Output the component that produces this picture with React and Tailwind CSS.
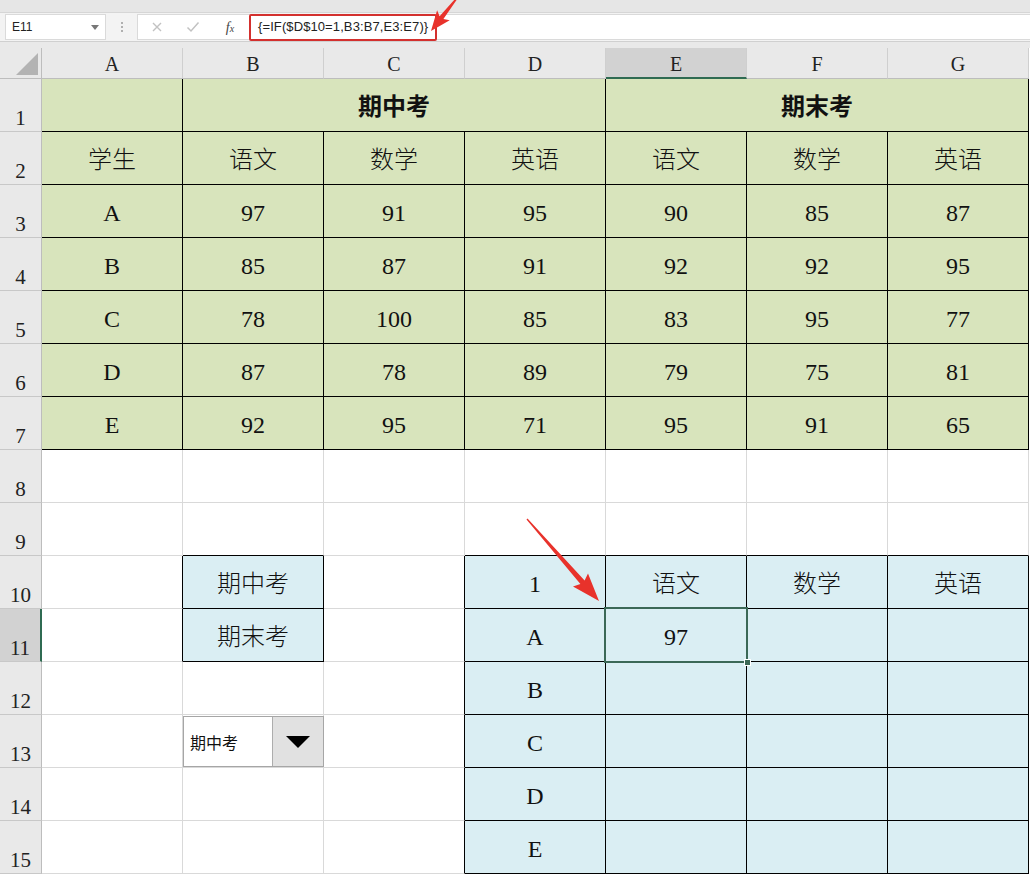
import React from "react";

const COLS = ["A", "B", "C", "D", "E", "F", "G"];

function region(r, c) {
  if (r < 1 || r > 15 || c < 1 || c > 7) return null;
  if (r <= 7) return "g";
  if (c === 2 && (r === 10 || r === 11)) return "b";
  if (c >= 4 && r >= 10) return "b";
  return null;
}

const scores = {
  3: ["A", "97", "91", "95", "90", "85", "87"],
  4: ["B", "85", "87", "91", "92", "92", "95"],
  5: ["C", "78", "100", "85", "83", "95", "77"],
  6: ["D", "87", "78", "89", "79", "75", "81"],
  7: ["E", "92", "95", "71", "95", "91", "65"],
};

function content(r, c) {
  if (r === 2) return ["学生", "语文", "数学", "英语", "语文", "数学", "英语"][c - 1];
  if (scores[r]) return scores[r][c - 1];
  if (r === 10) return { 2: "期中考", 4: "1", 5: "语文", 6: "数学", 7: "英语" }[c] || "";
  if (r === 11) return { 2: "期末考", 4: "A", 5: "97" }[c] || "";
  if (r >= 12 && c === 4) return ["B", "C", "D", "E"][r - 12];
  return "";
}

function arrowPoints(sx, sy, tx, ty, headLen, headHalf, tail, neck) {
  const dx = tx - sx;
  const dy = ty - sy;
  const len = Math.hypot(dx, dy);
  const ux = dx / len;
  const uy = dy / len;
  const nx = -uy;
  const ny = ux;
  const bx = tx - headLen * ux;
  const by = ty - headLen * uy;
  const nbx = bx + 3 * ux;
  const nby = by + 3 * uy;
  const pts = [
    [sx + tail * nx, sy + tail * ny],
    [nbx + neck * nx, nby + neck * ny],
    [bx + headHalf * nx, by + headHalf * ny],
    [tx, ty],
    [bx - headHalf * nx, by - headHalf * ny],
    [nbx - neck * nx, nby - neck * ny],
    [sx - tail * nx, sy - tail * ny],
  ];
  return pts.map((p) => p[0].toFixed(1) + "," + p[1].toFixed(1)).join(" ");
}

function Cell({ r, c, span = 1, bold = false }) {
  const reg = region(r, c);
  const rightBlack = reg || region(r, c + span);
  const bottomBlack = reg || region(r + 1, c);
  const bg = reg === "g" ? "bg-[#d8e4bc]" : reg === "b" ? "bg-[#daeef3]" : "bg-white";
  const spanCls = span === 3 ? "col-span-3" : "";
  const text = r === 1 ? (c === 2 ? "期中考" : c === 5 ? "期末考" : "") : content(r, c);
  const selected = r === 11 && c === 5;
  const dropdown = r === 13 && c === 2;
  return (
    <div
      className={`relative flex items-center justify-center border-r border-b ${
        rightBlack ? "border-r-black" : "border-r-[#d9d9d9]"
      } ${bottomBlack ? "border-b-black" : "border-b-[#d9d9d9]"} ${bg} ${spanCls}`}
    >
      {text ? (
        <span
          className={`pt-[3px] text-[24px] leading-none text-[#111] font-['Liberation_Serif','Noto_Sans_CJK_SC',serif] ${
            bold ? "font-bold" : "font-light"
          }`}
        >
          {text}
        </span>
      ) : null}
      {dropdown ? (
        <div className="absolute left-0 top-[1px] right-[-1px] bottom-0 flex border border-[#a6a6a6] bg-white">
          <div className="flex flex-1 items-center pl-[6px] text-[16px] text-[#111] font-['Noto_Sans_CJK_SC',sans-serif]">
            期中考
          </div>
          <div className="flex w-[51px] items-center justify-center border-l border-[#adadad] bg-[#e1e1e1]">
            <svg width="24" height="12" viewBox="0 0 24 12">
              <polygon points="0,0 24,0 12,12" fill="#000" />
            </svg>
          </div>
        </div>
      ) : null}
      {selected ? (
        <>
          <div className="absolute left-[-2px] top-[-2px] right-[-2px] bottom-[-2px] z-10 border-2 border-[#3b6856]" />
          <div className="absolute right-[-5px] bottom-[-5px] z-20 h-[7px] w-[7px] border border-white bg-[#3b6856]" />
        </>
      ) : null}
    </div>
  );
}

function RowHeader({ r }) {
  const sel = r === 11;
  return (
    <div
      className={`flex items-end justify-center pb-[2px] border-b border-b-[#c8c8c8] ${
        sel ? "bg-[#d2d2d2] border-r-2 border-r-[#2f6b52]" : "bg-[#e9e9e9] border-r border-r-[#bdbdbd]"
      }`}
    >
      <span className="text-[21px] leading-none text-[#222] font-['Liberation_Serif',serif]">{r}</span>
    </div>
  );
}

function ColHeader({ letter }) {
  const sel = letter === "E";
  return (
    <div
      className={`flex items-center justify-center border-r border-r-[#cfcfcf] ${
        sel ? "bg-[#d2d2d2] border-b-2 border-b-[#2f6b52]" : "bg-[#e9e9e9] border-b border-b-[#bdbdbd]"
      }`}
    >
      <span className="pt-[2px] text-[20px] leading-none text-[#222] font-['Liberation_Serif',serif]">{letter}</span>
    </div>
  );
}

export default function App() {
  const rows = [];
  for (let r = 1; r <= 15; r++) {
    rows.push(<RowHeader key={"h" + r} r={r} />);
    if (r === 1) {
      rows.push(<Cell key="1-1" r={1} c={1} />);
      rows.push(<Cell key="1-2" r={1} c={2} span={3} bold />);
      rows.push(<Cell key="1-5" r={1} c={5} span={3} bold />);
    } else {
      for (let c = 1; c <= 7; c++) rows.push(<Cell key={r + "-" + c} r={r} c={c} />);
    }
  }

  return (
    <div className="relative h-[875px] w-[1030px] overflow-hidden bg-white font-['Liberation_Sans',sans-serif]">
      {/* top strip */}
      <div className="h-[13px] border-b border-b-[#d6d6d6] bg-[#e6e6e6]" />
      {/* formula bar */}
      <div className="flex h-[28px] items-center bg-[#f3f3f3]">
        <div className="ml-[5px] flex h-[26px] w-[101px] items-center justify-between border border-[#dadada] bg-white pl-[6px] pr-[6px]">
          <span className="text-[12px] text-[#222]">E11</span>
          <svg width="8" height="5" viewBox="0 0 8 5">
            <polygon points="0,0 8,0 4,5" fill="#777" />
          </svg>
        </div>
        <div className="flex w-[31px] flex-col items-center justify-center gap-[2px]">
          <span className="h-[2px] w-[2px] bg-[#b0b0b0]" />
          <span className="h-[2px] w-[2px] bg-[#b0b0b0]" />
          <span className="h-[2px] w-[2px] bg-[#b0b0b0]" />
        </div>
        <div className="flex h-[26px] flex-1 items-center border border-r-0 border-[#dadada] bg-white">
          <div className="flex w-[36px] justify-center pl-[1px]">
            <svg width="12" height="12" viewBox="0 0 12 12">
              <path d="M2 2 L10 10 M10 2 L2 10" stroke="#c2c2c2" strokeWidth="1.4" />
            </svg>
          </div>
          <div className="flex w-[38px] justify-center">
            <svg width="14" height="12" viewBox="0 0 14 12">
              <path d="M1.5 6.5 L5 10 L12.5 1.5" stroke="#c2c2c2" strokeWidth="1.5" fill="none" />
            </svg>
          </div>
          <div className="flex w-[36px] justify-center">
            <span className="text-[14px] italic text-[#444] font-['Liberation_Serif',serif]">
              f<span className="text-[10px]">x</span>
            </span>
          </div>
          <div className="ml-[1px] flex h-[27px] items-center rounded-[2px] border-2 border-[#d3302e] px-[7px]">
            <span className="text-[13px] tracking-[0.1px] text-[#222] font-['Liberation_Sans',sans-serif]">
              {"{=IF($D$10=1,B3:B7,E3:E7)}"}
            </span>
          </div>
        </div>
      </div>
      <div className="h-[7px] border-t border-t-[#d0d0d0] bg-[#e9e9e9]" />

      {/* sheet grid */}
      <div className="grid grid-cols-[42px_repeat(7,141px)] grid-rows-[31px_repeat(15,53px)]">
        <div className="relative border-r border-r-[#bdbdbd] border-b border-b-[#bdbdbd] bg-[#e9e9e9]">
          <svg className="absolute right-[3px] bottom-[3px]" width="22" height="22" viewBox="0 0 22 22">
            <polygon points="22,0 22,22 0,22" fill="#b3b3b3" />
          </svg>
        </div>
        {COLS.map((l) => (
          <ColHeader key={l} letter={l} />
        ))}
        {rows}
      </div>

      {/* annotation arrows */}
      <svg className="pointer-events-none absolute left-0 top-0 z-30" width="1030" height="875">
        <polygon points={arrowPoints(457, -2, 431, 31, 20, 8, 0.8, 2.4)} fill="#e8322b" />
        <polygon points={arrowPoints(527, 519, 599, 601, 28, 10, 0.6, 2.8)} fill="#e8322b" />
      </svg>
    </div>
  );
}
